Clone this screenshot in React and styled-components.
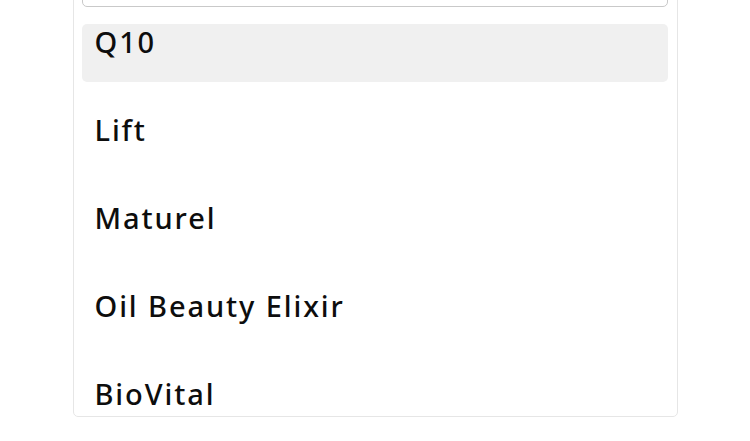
import styled, { createGlobalStyle } from "styled-components";

const GlobalStyle = createGlobalStyle`
  html, body {
    margin: 0;
    padding: 0;
    background: #ffffff;
    overflow: hidden;
  }
  body {
    font-family: "Noto Sans", "Open Sans", sans-serif;
    color: #0d0d0d;
  }
`;

const Page = styled.div`
  display: flex;
  justify-content: center;
  margin-top: -43px;
`;

const Panel = styled.div`
  box-sizing: border-box;
  width: 605px;
  height: 460px;
  border: 1px solid #e6e6e6;
  border-radius: 5px;
  padding: 9px 9px 0 8px;
  overflow: hidden;
  display: flex;
  flex-direction: column;
`;

const SearchInput = styled.div`
  box-sizing: border-box;
  height: 40px;
  border: 1px solid #c9c9c9;
  border-radius: 5px;
  flex-shrink: 0;
`;

const List = styled.ul`
  list-style: none;
  margin: 17px 0 0;
  padding: 0;
  display: flex;
  flex-direction: column;
  gap: 30px;
`;

const Item = styled.li`
  box-sizing: border-box;
  height: 58px;
  padding: 0 13px;
  border-radius: 5px;
  font-size: 29px;
  font-weight: 500;
  letter-spacing: 1.9px;
  line-height: 35px;
  background: ${(props) => (props.active ? "#f0f0f0" : "transparent")};
  flex-shrink: 0;
`;

const items = ["Q10", "Lift", "Maturel", "Oil Beauty Elixir", "BioVital"];

const App = () => {
  return (
    <>
      <GlobalStyle />
      <Page>
        <Panel>
          <SearchInput />
          <List>
            {items.map((name, i) => (
              <Item key={name} active={i === 0}>
                {name}
              </Item>
            ))}
          </List>
        </Panel>
      </Page>
    </>
  );
};

export default App;
